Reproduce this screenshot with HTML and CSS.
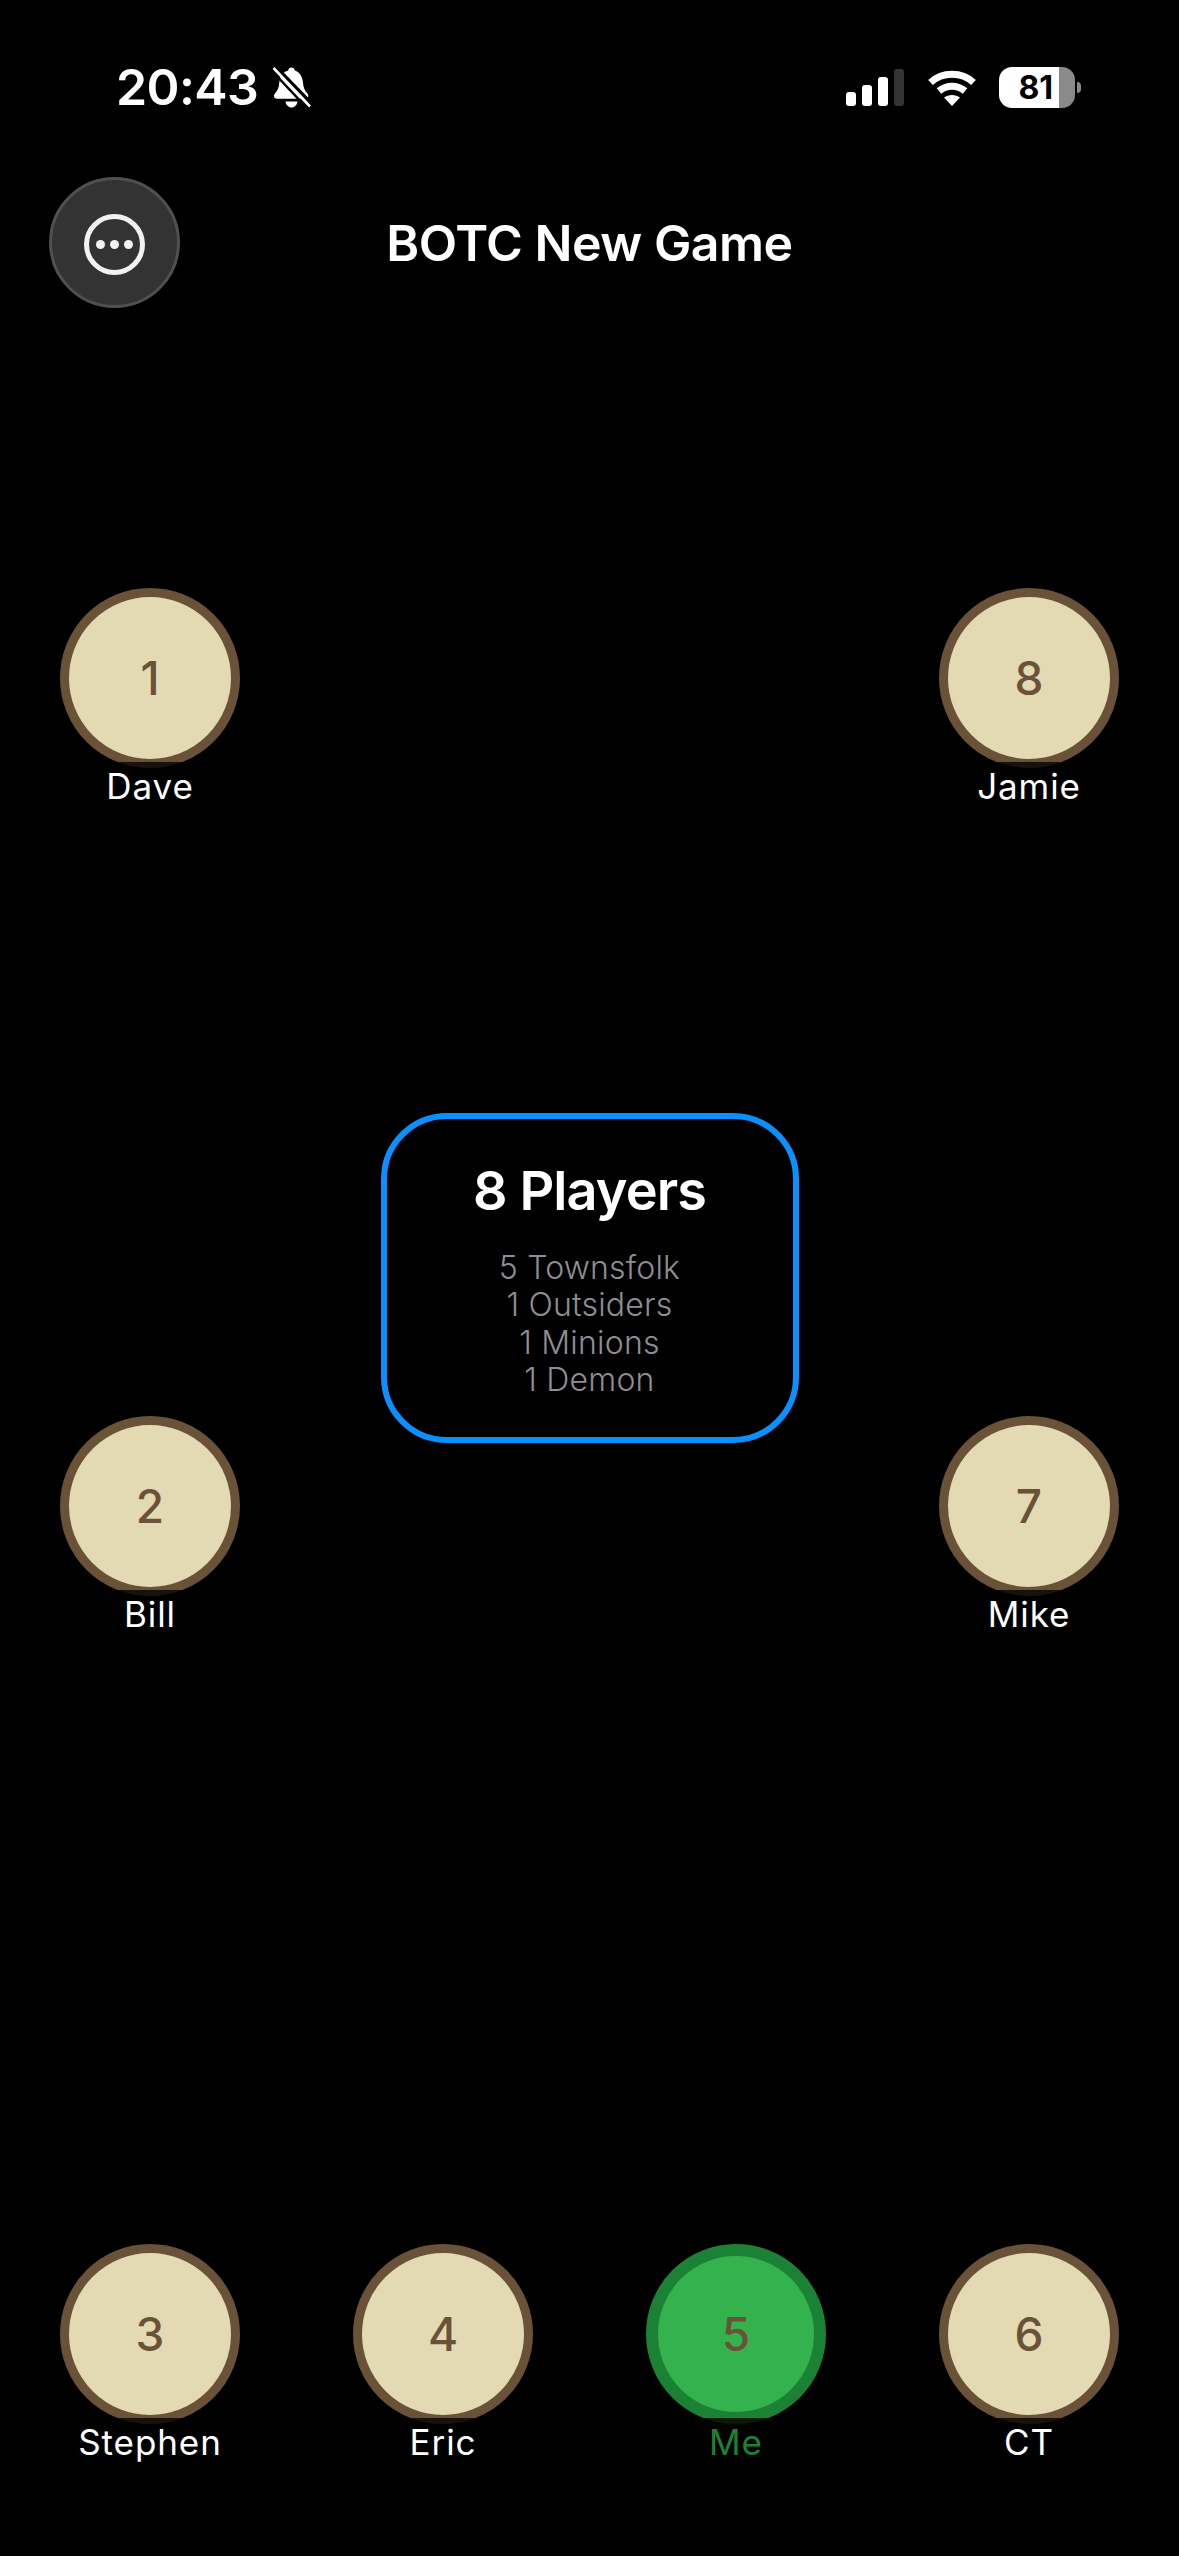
FILE: index.html
```html
<!DOCTYPE html>
<html>
<head>
	<title>BOTC New Game</title>
	<meta name="viewport" content="width=device-width, initial-scale=1">
	<link rel="stylesheet" href="styles.css">
</head>
<body>

	<div id="statusbar">
		<div class="status-left">
			<span id="clock">20:43</span>
			<svg class="bell" width="39" height="41" viewBox="0 0 39 41">
				<path d="M19.500 0.500c2 0 3 1.300 3.300 3 5.200 1.700 7.700 6.300 8.200 12 .3 4.500 1.500 8 4 10.500 1 1.100 1.300 2 1.300 3 0 1.700-1.300 2.800-3 2.800H5c-1.700 0-3-1.100-3-2.800 0-1 .4-1.900 1.300-3 2.500-2.500 3.700-6 4-10.500.5-5.700 3-10.300 8.900-12 .3-1.700 1.300-3 3.300-3z" fill="#fff"/>
				<path d="M13.500 34.500h12c-.5 3.500-3 6-6 6s-5.500-2.500-6-6z" fill="#fff"/>
				<line x1="1" y1="-3" x2="39" y2="36" stroke="#000" stroke-width="3.500"/>
				<line x1="1.500" y1="1" x2="38" y2="39.500" stroke="#fff" stroke-width="2.600"/>
				<line x1="-1" y1="3" x2="35" y2="41" stroke="#000" stroke-width="2.500"/>
			</svg>
		</div>
		<div class="status-right">
			<div class="signal">
				<i class="bar bar1"></i>
				<i class="bar bar2"></i>
				<i class="bar bar3"></i>
				<i class="bar bar4"></i>
			</div>
			<svg class="wifi" width="50" height="37" viewBox="0 0 50 37">
				<path d="M3.500 13.500C15.500 2.500 34.500 2.500 46.500 13.500" fill="none" stroke="#fff" stroke-width="7"/>
				<path d="M12 22C19.500 15.500 30.500 15.500 38 22" fill="none" stroke="#fff" stroke-width="7"/>
				<path d="M17 28.500C21.500 25 28.500 25 33 28.500L25 37z" fill="#fff"/>
			</svg>
			<div class="battery">
				<div class="battery-body"><span>81</span></div>
				<div class="battery-nub"></div>
			</div>
		</div>
	</div>

	<div id="header">
		<div id="menuButt">
			<svg width="61" height="61" viewBox="0 0 61 61">
				<circle cx="30.500" cy="30.500" r="28" fill="none" stroke="#f2f2f2" stroke-width="5"/>
				<circle cx="16.500" cy="30.500" r="4.500" fill="#f2f2f2"/>
				<circle cx="30.500" cy="30.500" r="4.500" fill="#f2f2f2"/>
				<circle cx="44.500" cy="30.500" r="4.500" fill="#f2f2f2"/>
			</svg>
		</div>
		<div id="title">BOTC New Game</div>
	</div>

	<div id="board">
		<div class="seat seat-left-top">
			<div class="token">1</div>
			<div class="name">Dave</div>
		</div>
		<div class="seat seat-right-top">
			<div class="token">8</div>
			<div class="name">Jamie</div>
		</div>

		<div id="summary">
			<div id="playerCount">8 Players</div>
			<div class="role">5 Townsfolk</div>
			<div class="role">1 Outsiders</div>
			<div class="role">1 Minions</div>
			<div class="role">1 Demon</div>
		</div>

		<div class="seat seat-left-mid">
			<div class="token">2</div>
			<div class="name">Bill</div>
		</div>
		<div class="seat seat-right-mid">
			<div class="token">7</div>
			<div class="name">Mike</div>
		</div>

		<div class="seat seat-bottom">
			<div class="token">3</div>
			<div class="name">Stephen</div>
		</div>
		<div class="seat seat-bottom">
			<div class="token">4</div>
			<div class="name">Eric</div>
		</div>
		<div class="seat seat-bottom me">
			<div class="token">5</div>
			<div class="name">Me</div>
		</div>
		<div class="seat seat-bottom">
			<div class="token">6</div>
			<div class="name">CT</div>
		</div>
	</div>

</body>
</html>
```

FILE: styles.css
```css
* {
	box-sizing: border-box;
}

html, body {
	margin: 0;
	height: 100%;
	background-color: #000;
	color: #fff;
	font-family: "Inter", "Liberation Sans", sans-serif;
}

body {
	overflow: hidden;
}

/* status bar */
#statusbar {
	height: 177px;
	padding: 62px 98px 0 116px;
	display: flex;
	justify-content: space-between;
	align-items: flex-start;
}

.status-left {
	display: flex;
	align-items: center;
	height: 51px;
	gap: 14px;
}

#clock {
	font-size: 50px;
	font-weight: 600;
	line-height: 51px;
	letter-spacing: -0.6px;
}

.status-right {
	display: flex;
	align-items: center;
	height: 51px;
}

.signal {
	display: flex;
	align-items: flex-end;
	gap: 6px;
	height: 37px;
	margin-right: 23px;
}

.bar {
	display: block;
	width: 10px;
	border-radius: 3px;
	background-color: #fff;
}

.bar1 { height: 14px; }
.bar2 { height: 21px; }
.bar3 { height: 29px; }
.bar4 { height: 37px; background-color: #333; }

.wifi {
	margin-right: 22px;
}

.battery {
	display: flex;
	align-items: center;
	gap: 2px;
}

.battery-body {
	width: 76px;
	height: 41px;
	border-radius: 13px;
	background: linear-gradient(to right, #fff 79%, #8a8a8a 79%);
	display: flex;
	align-items: center;
	justify-content: flex-end;
	padding-right: 22px;
}

.battery-body span {
	color: #000;
	font-size: 32px;
	font-weight: 700;
	line-height: 41px;
}

.battery-nub {
	width: 4px;
	height: 11px;
	border-radius: 0 6px 6px 0;
	background-color: #8a8a8a;
}

/* header */
#header {
	display: grid;
	grid-template-columns: 1fr auto 1fr;
	align-items: center;
	padding: 0 49px;
}

#menuButt {
	width: 131px;
	height: 131px;
	border-radius: 50%;
	background-color: #333;
	border: 3px solid #505050;
	padding-top: 4px;
	display: flex;
	align-items: center;
	justify-content: center;
}

#title {
	font-size: 50px;
	font-weight: 600;
	line-height: 60px;
	letter-spacing: -0.5px;
}

/* seats and the middle card */
#board {
	margin-top: 280px;
	padding: 0 60px;
	display: grid;
	grid-template-columns: repeat(4, 180px);
	grid-template-rows: 828px 828px auto;
	column-gap: 113px;
}

.seat {
	width: 180px;
	display: flex;
	flex-direction: column;
	align-items: center;
}

.seat-left-top { grid-column: 1; grid-row: 1; }
.seat-right-top { grid-column: 4; grid-row: 1; }
.seat-left-mid { grid-column: 1; grid-row: 2; }
.seat-right-mid { grid-column: 4; grid-row: 2; }
.seat-bottom { grid-row: 3; }

.token {
	width: 180px;
	height: 180px;
	border-radius: 50%;
	border: 9px solid #6a5238;
	background-color: #e3d9b2;
	color: #6a5238;
	font-size: 46px;
	font-weight: 500;
	display: flex;
	align-items: center;
	justify-content: center;
}

.name {
	margin-top: -6px;
	padding: 2px 12px 0;
	position: relative;
	background-color: rgba(0, 0, 0, 0.78);
	font-size: 35px;
	line-height: 44px;
	letter-spacing: 0.9px;
	text-align: center;
}

.me .token {
	border: 12px solid #1b8235;
	background-color: #34b24e;
}

.me .name {
	color: #1b8235;
}

#summary {
	grid-column: 2 / 4;
	grid-row: 1 / 3;
	justify-self: center;
	align-self: start;
	width: 418px;
	height: 330px;
	margin-top: 525px;
	padding-top: 40px;
	border: 6px solid #0a90ff;
	border-radius: 66px;
	display: flex;
	flex-direction: column;
	align-items: center;
}

#playerCount {
	font-size: 54px;
	font-weight: 600;
	line-height: 64px;
	letter-spacing: -0.9px;
	margin-bottom: 25.5px;
}

.role {
	color: #8e8e93;
	font-size: 32px;
	font-weight: 350;
	line-height: 37.5px;
	letter-spacing: 0.2px;
}
```
